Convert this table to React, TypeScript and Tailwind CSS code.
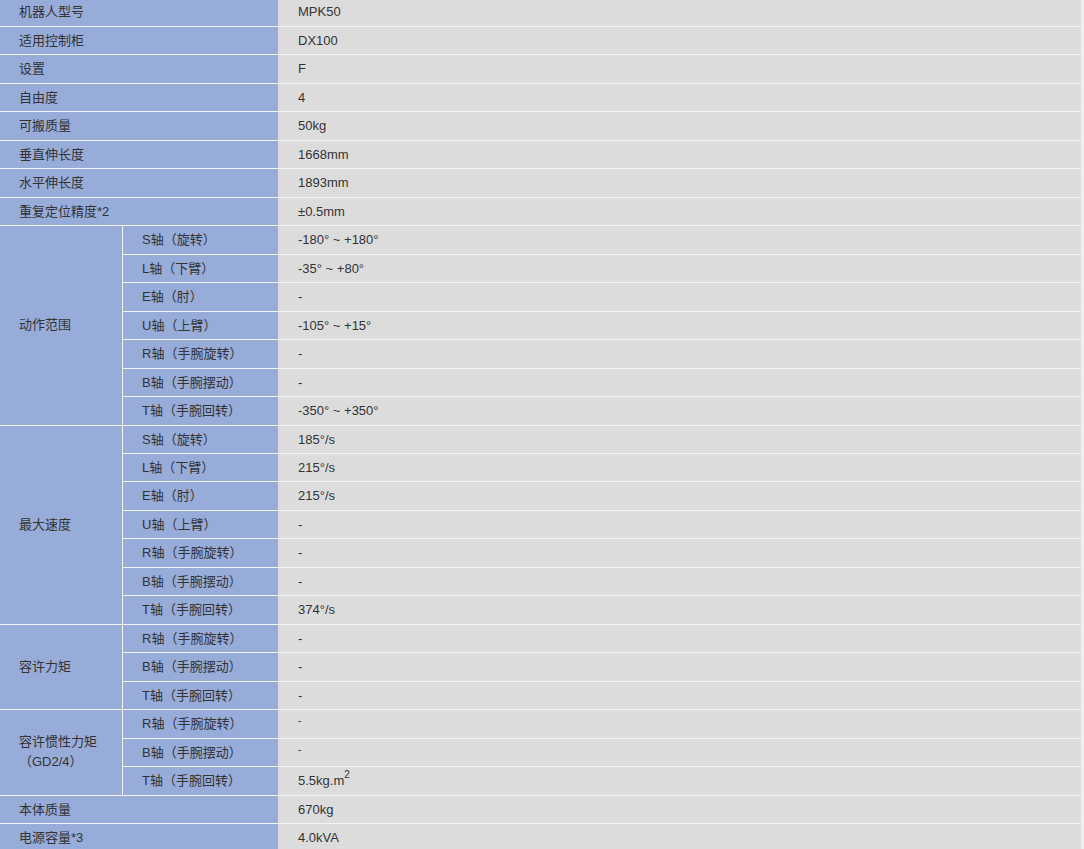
import React from "react";

type Sub = { axis: string; value: React.ReactNode };
type Row =
  | { kind: "single"; label: string; value: React.ReactNode }
  | { kind: "group"; label: React.ReactNode; subs: Sub[] };

const smallDash = <span className="relative -top-[3px] text-[10px]">-</span>;

const axes = ["S轴（旋转）", "L轴（下臂）", "E轴（肘）", "U轴（上臂）", "R轴（手腕旋转）", "B轴（手腕摆动）", "T轴（手腕回转）"];
const wrist = ["R轴（手腕旋转）", "B轴（手腕摆动）", "T轴（手腕回转）"];

const rows: Row[] = [
  { kind: "single", label: "机器人型号", value: "MPK50" },
  { kind: "single", label: "适用控制柜", value: "DX100" },
  { kind: "single", label: "设置", value: "F" },
  { kind: "single", label: "自由度", value: "4" },
  { kind: "single", label: "可搬质量", value: "50kg" },
  { kind: "single", label: "垂直伸长度", value: "1668mm" },
  { kind: "single", label: "水平伸长度", value: "1893mm" },
  { kind: "single", label: "重复定位精度*2", value: "±0.5mm" },
  {
    kind: "group",
    label: "动作范围",
    subs: ["-180° ~ +180°", "-35° ~ +80°", "-", "-105° ~ +15°", "-", "-", "-350° ~ +350°"].map((v, i) => ({ axis: axes[i], value: v })),
  },
  {
    kind: "group",
    label: "最大速度",
    subs: ["185°/s", "215°/s", "215°/s", "-", "-", "-", "374°/s"].map((v, i) => ({ axis: axes[i], value: v })),
  },
  {
    kind: "group",
    label: "容许力矩",
    subs: ["-", "-", "-"].map((v, i) => ({ axis: wrist[i], value: v })),
  },
  {
    kind: "group",
    label: (
      <>
        容许惯性力矩
        <br />
        （GD2/4）
      </>
    ),
    subs: [
      { axis: wrist[0], value: smallDash },
      { axis: wrist[1], value: smallDash },
      {
        axis: wrist[2],
        value: (
          <>
            5.5kg.m<span className="relative -top-[6px] text-[10px]">2</span>
          </>
        ),
      },
    ],
  },
  { kind: "single", label: "本体质量", value: "670kg" },
  { kind: "single", label: "电源容量*3", value: "4.0kVA" },
];

const spanClass: Record<number, string> = {
  3: "row-span-3",
  7: "row-span-7",
};

export default function App() {
  return (
    <div className="h-[849px] overflow-hidden bg-[#efefef] font-['Liberation_Sans','Noto_Sans_CJK_SC',sans-serif] text-[13px] text-[#333]">
      <div className="-mt-[1.5px] grid w-[1081px] grid-cols-[123px_155px_1fr] auto-rows-[27.47px] gap-y-px bg-[#f4f4f4]">
        {rows.map((row, i) =>
          row.kind === "single" ? (
            <React.Fragment key={i}>
              <div className="col-span-2 flex items-center bg-[#98acd9] pl-[19px]">{row.label}</div>
              <div className="flex items-center bg-[#dcdcdc] pl-5">{row.value}</div>
            </React.Fragment>
          ) : (
            <React.Fragment key={i}>
              <div
                className={`${spanClass[row.subs.length]} flex items-center border-r border-[#f4f4f4] bg-[#98acd9] pl-[19px] leading-[20px]`}
              >
                <div>{row.label}</div>
              </div>
              {row.subs.map((s, j) => (
                <React.Fragment key={j}>
                  <div className="col-start-2 flex items-center bg-[#98acd9] pl-[19px]">{s.axis}</div>
                  <div className="flex items-center bg-[#dcdcdc] pl-5">{s.value}</div>
                </React.Fragment>
              ))}
            </React.Fragment>
          )
        )}
      </div>
    </div>
  );
}
